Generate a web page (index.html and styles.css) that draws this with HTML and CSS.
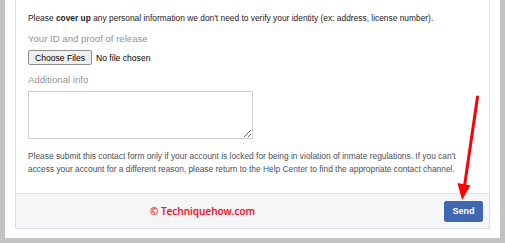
FILE: index.html
```html
<!DOCTYPE html>
<html>
<head>
<meta charset="utf-8">
<link rel="stylesheet" href="styles.css">
</head>
<body>
<div class="panel">
  <div class="card">
    <div class="content">
      <p class="note">Please <b>cover up</b> any personal information we don't need to verify your identity (ex: address, license number).</p>
      <div class="label">Your ID and proof of release</div>
      <div class="file-row"><button class="file-btn">Choose Files</button><span class="file-none">No file chosen</span></div>
      <div class="label label2">Additional info</div>
      <textarea class="info"></textarea>
      <p class="notice">Please submit this contact form only if your account is locked for being in violation of inmate regulations. If you can't access your account for a different reason, please return to the <a class="link">Help Center</a> to find the appropriate contact channel.</p>
    </div>
    <div class="footer">
      <span class="watermark">© Techniquehow.com</span>
      <button class="send">Send</button>
    </div>
  </div>
  <svg class="arrow" width="505" height="243" viewBox="0 0 505 243">
    <line x1="477.5" y1="97" x2="464.5" y2="186" stroke="#ff0000" stroke-width="3" stroke-linecap="round"/>
    <polygon points="457.5,183 470.5,185.5 462,200" fill="#ff0000"/>
  </svg>
</div>
</body>
</html>
```
FILE: styles.css
```css
html, body {
  margin: 0;
  padding: 0;
}
body {
  background: #c3c3c3;
  width: 505px;
  height: 243px;
  overflow: hidden;
  font-family: "Liberation Sans", Arial, sans-serif;
}
.panel {
  margin: 0 5px;
  height: 238px;
  background: #ffffff;
  padding: 0 10px;
  box-sizing: border-box;
}
.card {
  border: 1px solid #dddfe2;
  border-top: 0;
  background: #ffffff;
}
.content {
  padding: 13px 12px 17px 12px;
}
.note {
  margin: 0;
  font-size: 8.4px;
  line-height: 11px;
  color: #1d2129;
}
.note b {
  font-weight: bold;
}
.label {
  margin-top: 9px;
  font-size: 9.6px;
  line-height: 12px;
  color: #90949c;
}
.file-row {
  display: flex;
  align-items: center;
  margin-top: 5px;
  height: 15px;
}
.file-btn {
  font-family: "Liberation Sans", Arial, sans-serif;
  font-size: 8.6px;
  height: 15px;
  width: 64px;
  padding: 0;
  border: 1px solid #8f8f8f;
  border-radius: 2px;
  background: #efefef;
  color: #000;
}
.file-none {
  margin-left: 4px;
  font-size: 8.6px;
  color: #000;
}
.label2 {
  margin-top: 9px;
}
.info {
  display: block;
  margin: 5px 0 0 0;
  width: 225px;
  height: 48px;
  box-sizing: border-box;
  border: 1px solid #ccd0d5;
  border-radius: 0;
  padding: 2px;
}
.notice {
  margin: 11px 0 0 0;
  font-size: 8.4px;
  line-height: 13px;
  color: #4b4f56;
}
.link {
  color: #385898;
}
.footer {
  display: flex;
  align-items: center;
  justify-content: space-between;
  height: 34px;
  border-top: 1px solid #dddfe2;
  background: #f5f6f7;
  padding: 0 6px 0 134px;
}
.watermark {
  font-family: "Open Sans", "Liberation Sans", sans-serif;
  font-weight: 600;
  font-size: 10px;
  color: #e8202c;
  text-shadow: 0 0 1px #ff9fb0;
}
.send {
  width: 39px;
  height: 21px;
  padding: 0;
  border: 1px solid #4267b2;
  border-radius: 2px;
  background: #4267b2;
  color: #ffffff;
  font-family: "Liberation Sans", Arial, sans-serif;
  font-weight: bold;
  font-size: 9px;
}
.arrow {
  position: absolute;
  left: 0;
  top: 0;
  pointer-events: none;
}
```
